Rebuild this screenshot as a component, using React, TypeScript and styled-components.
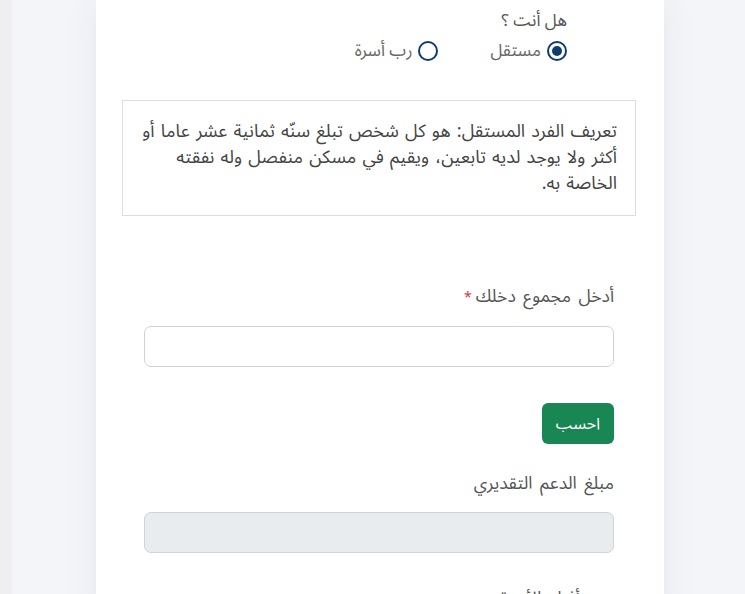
import React, { useState } from 'react';
import styled, { createGlobalStyle } from 'styled-components';

const GlobalStyle = createGlobalStyle`
    html, body {
        margin: 0;
        padding: 0;
        height: 100%;
        overflow: hidden;
    }
    body {
        font-family: "Noto Sans Arabic", "DejaVu Sans", sans-serif;
        background: #f4f5f9;
    }
`

const Page = styled.div`
        display: flex;
        min-height: 594px;
        border-left: 12px solid #efefef;
        box-sizing: border-box;
`

const Main = styled.main`
        flex: 1;
        display: flex;
        justify-content: center;
        padding-left: 3px;
`

const Card = styled.section`
        direction: rtl;
        width: 568px;
        background: #ffffff;
        box-shadow: 0 0 32px rgba(40, 50, 90, 0.07);
        padding: 10px 28px 0 26px;
        box-sizing: border-box;
`

const Question = styled.div`
        padding-right: 69px;
        color: #555;
`

const QuestionTitle = styled.div`
        font-size: 17px;
        line-height: 22px;
`

const RadioRow = styled.div`
        display: flex;
        gap: 52px;
        margin-top: 1px;
`

const RadioLabel = styled.label`
        display: flex;
        align-items: center;
        gap: 6px;
        font-size: 17px;
        color: #666;
        cursor: pointer;
`

const RadioDot = styled.span<{ $checked: boolean }>`
        width: 20px;
        height: 20px;
        border-radius: 50%;
        border: 2px solid #0f3b73;
        box-sizing: border-box;
        display: flex;
        align-items: center;
        justify-content: center;
        &::after {
            content: '';
            width: 10px;
            height: 10px;
            border-radius: 50%;
            background: ${p => (p.$checked ? '#0f3b73' : 'transparent')};
        }
`

const InfoBox = styled.div`
        margin-top: 31px;
        border: 1px solid #dedede;
        padding: 17px 18px 19px 3px;
        font-size: 18px;
        word-spacing: 1.5px;
        line-height: 26px;
        color: #444;
`

const Form = styled.div`
        padding: 0 22px;
        margin-top: 69px;
`

const Label = styled.div`
        font-size: 17.5px;
        word-spacing: 3px;
        line-height: 24px;
        color: #555;
        margin-bottom: 16px;
`

const Required = styled.span`
        color: #dc3545;
        margin-right: 4px;
        font-size: 14px;
`

const Input = styled.input<{ $disabled?: boolean }>`
        display: block;
        width: 100%;
        height: 41px;
        box-sizing: border-box;
        border: 1px solid ${p => (p.$disabled ? '#ced4da' : '#cfd3d8')};
        background: ${p => (p.$disabled ? '#e9ecef' : '#ffffff')};
        border-radius: 7px;
        padding: 6px 12px;
        font-size: 16px;
        outline: none;
`

const CalcButton = styled.button`
        margin-top: 36px;
        height: 41px;
        padding: 0 14px;
        border: none;
        border-radius: 6px;
        background: #198754;
        color: #fff;
        font-size: 16px;
        font-family: inherit;
        cursor: pointer;
`

const Field = styled.div<{ $top: number }>`
        margin-top: ${p => p.$top}px;
`

const App: React.FC = () => {
    const [kind, setKind] = useState('single');
    return <>
        <GlobalStyle />
        <Page>
            <Main>
                <Card>
                    <Question>
                        <QuestionTitle>هل أنت ؟</QuestionTitle>
                        <RadioRow>
                            <RadioLabel onClick={() => setKind('single')}>
                                <RadioDot $checked={kind === 'single'} />
                                مستقل
                            </RadioLabel>
                            <RadioLabel onClick={() => setKind('family')}>
                                <RadioDot $checked={kind === 'family'} />
                                رب أسرة
                            </RadioLabel>
                        </RadioRow>
                    </Question>
                    <InfoBox>
                        تعريف الفرد المستقل: هو كل شخص تبلغ سنّه ثمانية عشر عاما أو<br />
                        أكثر ولا يوجد لديه تابعين، ويقيم في مسكن منفصل وله نفقته<br />
                        الخاصة به.
                    </InfoBox>
                    <Form>
                        <Label>أدخل مجموع دخلك<Required>*</Required></Label>
                        <Input type="text" />
                        <CalcButton type="button">احسب</CalcButton>
                        <Field $top={28}>
                            <Label>مبلغ الدعم التقديري</Label>
                            <Input type="text" disabled $disabled />
                        </Field>
                        <Field $top={34}>
                            <Label>عدد أفراد الأسرة</Label>
                        </Field>
                    </Form>
                </Card>
            </Main>
        </Page>
    </>
};

export default App;
